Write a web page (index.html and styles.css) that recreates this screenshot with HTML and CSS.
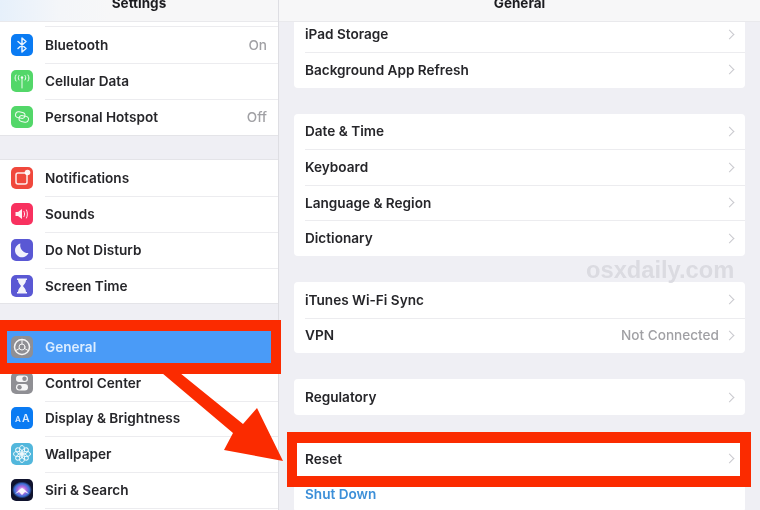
FILE: index.html
```html
<!DOCTYPE html>
<html lang="en">
<head>
<meta charset="utf-8">
<title>Settings - General</title>
<link rel="stylesheet" href="styles.css">
</head>
<body>
<div class="app">
  <aside class="sidebar">
    <header class="bar bar-left"><span class="bar-title">Settings</span></header>
    <div class="scroller">
      <div class="group first-group">
        <div class="sliver"></div>
        <div class="row"><span class="icon blue"><svg viewBox="0 0 22 22"><path class="st" d="M7 7.500l8 7-4 3.500V4l4 3.500-8 7"/></svg></span><span class="label">Bluetooth</span><span class="value">On</span></div>
        <div class="row"><span class="icon green"><svg viewBox="0 0 22 22"><path class="st thin" d="M11 8v10M8 5.500c-1 1.500-1 3 0 4.500M14 5.500c1 1.500 1 3 0 4.500M5 5c-1.300 2-1.300 4 0 6M17 5c1.300 2 1.300 4 0 6"/><circle class="fl" cx="11" cy="7.500" r="1.200"/></svg></span><span class="label">Cellular Data</span></div>
        <div class="row"><span class="icon green"><svg viewBox="0 0 22 22"><rect class="st thin" x="4.500" y="6" width="9.500" height="6" rx="3" transform="rotate(12 9 9)"/><rect class="st thin" x="8" y="10" width="9.500" height="6" rx="3" transform="rotate(12 13 13)"/></svg></span><span class="label">Personal Hotspot</span><span class="value">Off</span></div>
      </div>
      <div class="group">
        <div class="row"><span class="icon red"><svg viewBox="0 0 22 22"><rect class="st" x="5" y="6" width="11" height="11" rx="2"/><circle class="fl" cx="16.500" cy="5.500" r="2.800"/></svg></span><span class="label">Notifications</span></div>
        <div class="row"><span class="icon pink"><svg viewBox="0 0 22 22"><path class="fl" d="M4.500 9H7l4-3v10l-4-3H4.500z"/><path class="st thin" d="M13 8.500c.8 1.600.8 3.400 0 5M15.500 7c1.200 2.500 1.200 5.500 0 8"/></svg></span><span class="label">Sounds</span></div>
        <div class="row"><span class="icon indigo"><svg viewBox="0 0 22 22"><path class="fl" d="M9.500 4.500a7 7 0 1 0 8 9.500 7.500 7.500 0 0 1-8-9.500z"/></svg></span><span class="label">Do Not Disturb</span></div>
        <div class="row last"><span class="icon indigo"><svg viewBox="0 0 22 22"><path class="fl" d="M6 3.500h10v1.500h-1c0 3-2 4.500-3 6 1 1.500 3 3 3 6h1V18.500H6V17h1c0-3 2-4.500 3-6-1-1.500-3-3-3-6H6z"/></svg></span><span class="label">Screen Time</span></div>
      </div>
      <div class="group">
        <div class="row selected"><span class="icon grey"><svg viewBox="0 0 22 22"><circle class="st" cx="11" cy="11" r="7.500"/><circle class="st thin" cx="11" cy="11" r="3"/><path class="st thin" d="M11 3.500V8M4.500 14.700L8.400 12.500M17.500 14.700l-3.900-2.200"/></svg></span><span class="label">General</span></div>
        <div class="row"><span class="icon grey"><svg viewBox="0 0 22 22"><rect class="fl" x="5" y="3.500" width="12" height="6.500" rx="3.200"/><circle class="cut" cx="13.500" cy="6.700" r="2.200"/><rect class="fl" x="5" y="12" width="12" height="6.500" rx="3.200"/><circle class="cut" cx="8.500" cy="15.200" r="2.200"/></svg></span><span class="label">Control Center</span></div>
        <div class="row"><span class="icon blue"><svg viewBox="0 0 22 22"><text class="aa small" x="4" y="15">A</text><text class="aa" x="11" y="15">A</text></svg></span><span class="label">Display &amp; Brightness</span></div>
        <div class="row"><span class="icon sky"><svg viewBox="0 0 22 22"><g class="st thin"><ellipse cx="11" cy="6.800" rx="2.600" ry="4.200"/><ellipse cx="11" cy="15.200" rx="2.600" ry="4.200"/><ellipse cx="6.800" cy="11" rx="4.200" ry="2.600"/><ellipse cx="15.200" cy="11" rx="4.200" ry="2.600"/><ellipse cx="8" cy="8" rx="3.800" ry="2.400" transform="rotate(45 8 8)"/><ellipse cx="14" cy="14" rx="3.800" ry="2.400" transform="rotate(45 14 14)"/><ellipse cx="14" cy="8" rx="3.800" ry="2.400" transform="rotate(-45 14 8)"/><ellipse cx="8" cy="14" rx="3.800" ry="2.400" transform="rotate(-45 8 14)"/></g></svg></span><span class="label">Wallpaper</span></div>
        <div class="row"><span class="icon siri"><svg viewBox="0 0 22 22"><defs><radialGradient id="siriGlow" cx="50%" cy="50%" r="50%"><stop offset="0" stop-color="#f4f0ff"/><stop offset=".4" stop-color="#b36be0"/><stop offset=".75" stop-color="#3b6fd6"/><stop offset="1" stop-color="#10132e"/></radialGradient></defs><ellipse cx="11" cy="11" rx="10" ry="8.500" fill="url(#siriGlow)"/><path class="fl" d="M4 15l4-4 3-2 3 2 4 4-4-2-3 3-3-3z"/></svg></span><span class="label">Siri &amp; Search</span></div>
        <div class="row"></div>
      </div>
    </div>
  </aside>
  <main class="detail">
    <header class="bar"><span class="bar-title">General</span></header>
    <div class="scroller detail-scroller">
      <section class="card">
        <div class="row wide"><span class="label">iPad Storage</span><span class="chev"></span></div>
        <div class="row wide"><span class="label">Background App Refresh</span><span class="chev"></span></div>
      </section>
      <section class="card">
        <div class="row wide"><span class="label">Date &amp; Time</span><span class="chev"></span></div>
        <div class="row wide"><span class="label">Keyboard</span><span class="chev"></span></div>
        <div class="row wide"><span class="label">Language &amp; Region</span><span class="chev"></span></div>
        <div class="row wide"><span class="label">Dictionary</span><span class="chev"></span></div>
      </section>
      <section class="card">
        <div class="row wide"><span class="label">iTunes Wi-Fi Sync</span><span class="chev"></span></div>
        <div class="row wide"><span class="label">VPN</span><span class="value">Not Connected</span><span class="chev"></span></div>
      </section>
      <section class="card">
        <div class="row wide"><span class="label">Regulatory</span><span class="chev"></span></div>
      </section>
      <section class="card">
        <div class="row wide"><span class="label">Reset</span><span class="chev"></span></div>
        <div class="row wide"><span class="label link">Shut Down</span></div>
      </section>
    </div>
  </main>
  <div class="watermark">osxdaily.com</div>
  <div class="callout callout-general"></div>
  <div class="callout callout-reset"></div>
  <svg class="arrow" viewBox="0 0 760 510"><polygon points="162,373 180,373 243,424 257,408 283,461 224,450 233,433"/></svg>
</div>
</body>
</html>
```
FILE: styles.css
```css
* { box-sizing: border-box; }
html, body { margin: 0; width: 760px; height: 510px; overflow: hidden; background: #efeff4; }
.app {
  position: relative;
  display: flex;
  width: 760px;
  height: 510px;
  overflow: hidden;
  font-family: Inter, "Liberation Sans", sans-serif;
  font-size: 13.600px;
  font-weight: 600;
  color: #26262a;
  background: #efeff4;
  filter: blur(0.6px);
}
.sidebar {
  display: flex;
  flex-direction: column;
  flex: 0 0 279px;
  height: 510px;
  border-right: 1px solid #dedee3;
}
.detail {
  display: flex;
  flex-direction: column;
  flex: 1;
  height: 510px;
  min-width: 0;
}
.bar {
  flex: 0 0 22px;
  display: flex;
  justify-content: center;
  align-items: flex-start;
  height: 22px;
  overflow: hidden;
  background: #f7f7f8;
  border-bottom: 1px solid #e9e9ec;
}
.bar-left { background: linear-gradient(90deg, #e6f0fb 0, #f4f6f9 60px, #f7f7f8 110px); }
.bar-title {
  margin-top: -5px;
  font-size: 13.500px;
  line-height: 17px;
  font-weight: 700;
  color: #1c1c20;
}
.scroller { flex: 1; min-height: 0; overflow: hidden; }
.group { margin-top: 23.500px; background: #fff; border-top: 1px solid #e4e4e8; border-bottom: 1px solid #e4e4e8; }
.first-group { margin-top: 0; border-top: 0; }
.sliver { height: 5.400px; border-bottom: 1px solid #ececef; margin-left: 45px; }
.row {
  position: relative;
  display: flex;
  align-items: center;
  height: 35.800px;
  padding: 0 11px;
}
.row.wide { height: 35.600px; }
.row + .row::before {
  content: "";
  position: absolute;
  top: 0;
  left: 45px;
  right: 0;
  height: 1px;
  background: #ececef;
}
.row.wide::before { left: 11px; }
.icon {
  flex: 0 0 22px;
  width: 22px;
  height: 22px;
  margin-right: 12px;
  border-radius: 5px;
  overflow: hidden;
}
.icon svg { display: block; width: 22px; height: 22px; }
.st { fill: none; stroke: #fff; stroke-width: 1.500; stroke-linecap: round; stroke-linejoin: round; opacity: .9; }
.st.thin, .thin { stroke-width: 1; }
.fl { fill: #fff; opacity: .92; }
.cut { fill: #8e8e93; }
.aa { fill: #dcecff; font-size: 10.500px; font-weight: 600; font-family: Inter, sans-serif; }
.aa.small { font-size: 8px; }
.blue { background: #0a7bf3; }
.green { background: #53d769; }
.red { background: #f0483c; }
.pink { background: #f8315f; }
.indigo { background: #5a58d4; }
.grey { background: #8f8f94; }
.sky { background: #52b7dc; }
.siri { background: #10132e; }
.label { flex: 1; white-space: nowrap; }
.link { color: #3c8fd8; }
.value { color: #a0a0a4; white-space: nowrap; font-weight: 500; }
.selected { background: #4a9bf7; }
.selected .label { color: #dcedff; }
.selected + .row::before { display: none; }
.detail-scroller { padding: 0 15px; }
.card { margin-top: 26px; background: #fff; border-radius: 4px; overflow: hidden; }
.card:first-child { margin-top: -5.500px; }
.chev {
  flex: 0 0 7px;
  width: 7px;
  height: 7px;
  margin: 0 1px 0 7px;
  border-top: 1.300px solid #c9c9ce;
  border-right: 1.300px solid #c9c9ce;
  transform: rotate(45deg);
}
.watermark {
  position: absolute;
  left: 586px;
  top: 256px;
  font-family: "Liberation Sans", sans-serif;
  font-size: 23.700px;
  line-height: 28px;
  font-weight: 700;
  color: #d9d9df;
  opacity: .9;
}
.callout { position: absolute; border-style: solid; border-color: #fb2b00; }
.callout-general { left: -2px; top: 320px; width: 283px; height: 54px; border-width: 11px 10px 11px 9px; }
.callout-reset { left: 287px; top: 432px; width: 464px; height: 55px; border-width: 11px 11px 11px 10px; }
.arrow { position: absolute; left: 0; top: 0; width: 760px; height: 510px; }
.arrow polygon { fill: #fb2b00; }
```
